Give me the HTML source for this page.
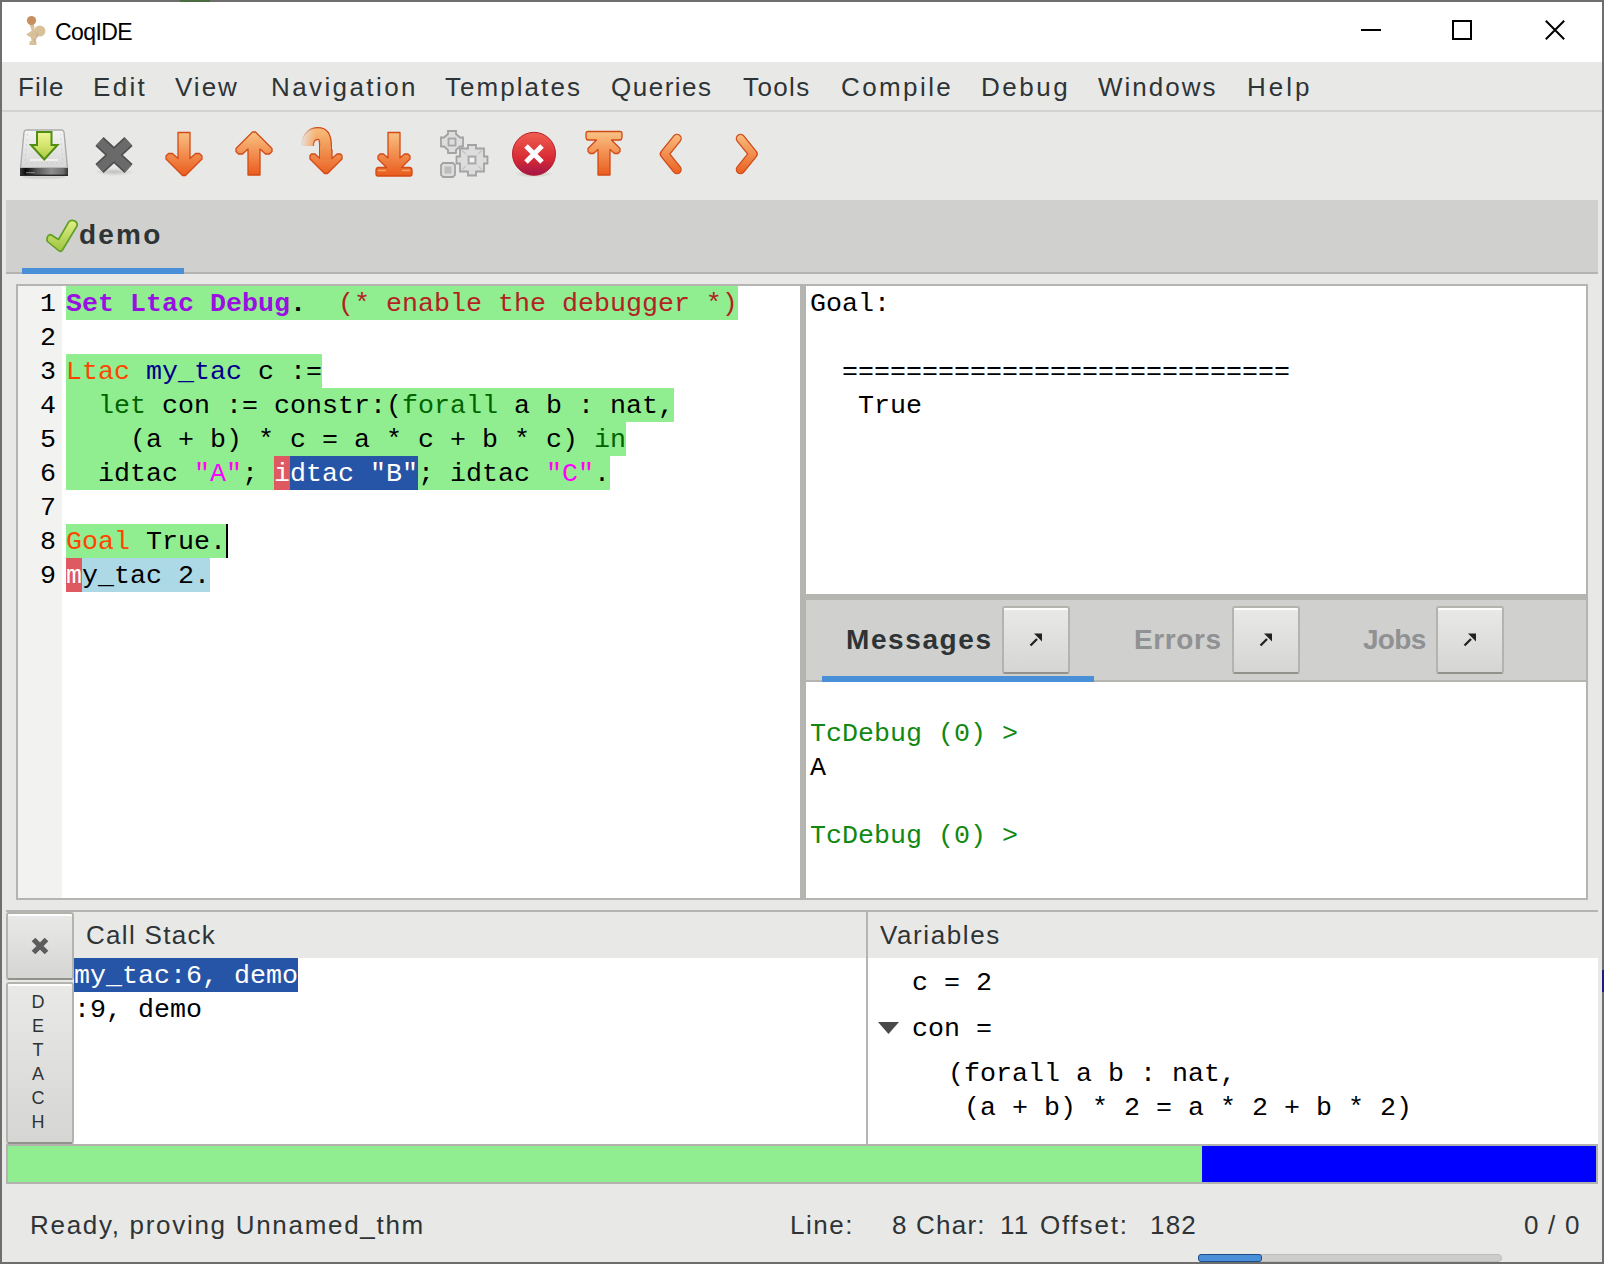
<!DOCTYPE html>
<html><head><meta charset="utf-8">
<style>
*{margin:0;padding:0;box-sizing:border-box}
html,body{width:1604px;height:1264px;overflow:hidden;background:#e8e8e7;position:relative}
.a{position:absolute}
.s{font-family:"Liberation Sans",sans-serif;white-space:pre}
.m{font-family:"Liberation Mono",monospace;white-space:pre;font-size:26.67px;line-height:34px}
.menu{font-size:26px;color:#2e3436;top:70px;letter-spacing:1.2px;line-height:34px}
.btn{border:2px solid #b4b4ae;border-bottom-color:#92928c;border-radius:3px;background:linear-gradient(#e9e9e8,#d5d5d3);box-shadow:inset 0 2px #fdfdfd}
.ln{color:#000;text-align:right;width:40px;left:16px}
</style></head><body>
<!-- window border -->
<div class="a" style="left:0;top:0;width:1604px;height:1264px;background:#6e6e6e"></div>
<div class="a" style="left:2px;top:2px;width:1600px;height:1260px;background:#e8e8e7"></div>
<div class="a" style="left:180px;top:0;width:30px;height:2px;background:#4b6b42"></div>
<div class="a" style="left:1602px;top:970px;width:2px;height:22px;background:#1a1a80"></div>
<!-- title bar -->
<div class="a" style="left:2px;top:2px;width:1600px;height:60px;background:#fff"></div>
<div class="a s" style="left:55px;top:18px;font-size:23px;line-height:28px;color:#000;letter-spacing:-0.6px">CoqIDE</div>
<!-- window controls -->
<div class="a" style="left:1361px;top:29px;width:20px;height:2px;background:#000"></div>
<div class="a" style="left:1452px;top:20px;width:20px;height:20px;border:2px solid #000"></div>
<svg class="a" style="left:1544px;top:19px" width="22" height="22"><path d="M1.8 1.8L20.2 20.2M20.2 1.8L1.8 20.2" stroke="#000" stroke-width="2"/></svg>

<!-- menu -->
<div class="a s menu" style="left:18px;letter-spacing:1.2px">File</div>
<div class="a s menu" style="left:93px;letter-spacing:2.3px">Edit</div>
<div class="a s menu" style="left:175px;letter-spacing:2.0px">View</div>
<div class="a s menu" style="left:271px;letter-spacing:2.4px">Navigation</div>
<div class="a s menu" style="left:445px;letter-spacing:2.05px">Templates</div>
<div class="a s menu" style="left:611px;letter-spacing:1.5px">Queries</div>
<div class="a s menu" style="left:743px;letter-spacing:1.4px">Tools</div>
<div class="a s menu" style="left:841px;letter-spacing:2.4px">Compile</div>
<div class="a s menu" style="left:981px;letter-spacing:2.5px">Debug</div>
<div class="a s menu" style="left:1098px;letter-spacing:2.0px">Windows</div>
<div class="a s menu" style="left:1247px;letter-spacing:3.0px">Help</div>
<div class="a" style="left:2px;top:110px;width:1600px;height:2px;background:#d2d2d0"></div>

<!-- TOOLBAR placeholder -->

<svg class="a" style="left:0;top:110px" width="800" height="90" viewBox="0 110 800 90">
<defs>
<linearGradient id="og" x1="0" y1="132" x2="0" y2="176" gradientUnits="userSpaceOnUse"><stop offset="0" stop-color="#f9c183"/><stop offset="1" stop-color="#ea5b1c"/></linearGradient>
<linearGradient id="gg" x1="0" y1="132" x2="0" y2="160" gradientUnits="userSpaceOnUse"><stop offset="0" stop-color="#eef59a"/><stop offset="0.5" stop-color="#d2e46a"/><stop offset="1" stop-color="#a6c640"/></linearGradient>
<linearGradient id="dg" x1="0" y1="130" x2="0" y2="168" gradientUnits="userSpaceOnUse"><stop offset="0" stop-color="#f4f4f4"/><stop offset="1" stop-color="#d6d6d6"/></linearGradient>
<linearGradient id="bg2" x1="20" y1="0" x2="68" y2="0" gradientUnits="userSpaceOnUse"><stop offset="0" stop-color="#3a3a3a"/><stop offset="0.12" stop-color="#080808"/><stop offset="0.35" stop-color="#555"/><stop offset="0.65" stop-color="#8e8e8e"/><stop offset="0.9" stop-color="#6e6e6e"/><stop offset="1" stop-color="#333"/></linearGradient>
<linearGradient id="rg" x1="0" y1="132" x2="0" y2="176" gradientUnits="userSpaceOnUse"><stop offset="0" stop-color="#f06050"/><stop offset="0.6" stop-color="#d82a34"/><stop offset="1" stop-color="#a0144a"/></linearGradient>
<linearGradient id="ogu" x1="0" y1="175" x2="0" y2="132" gradientUnits="userSpaceOnUse"><stop offset="0" stop-color="#f9c183"/><stop offset="1" stop-color="#ea5b1c"/></linearGradient>
<linearGradient id="og2" x1="0" y1="132" x2="0" y2="176" gradientUnits="userSpaceOnUse"><stop offset="0" stop-color="#f5b774"/><stop offset="1" stop-color="#ea5b1c"/></linearGradient>
<linearGradient id="fade" x1="301" y1="0" x2="314" y2="0" gradientUnits="userSpaceOnUse"><stop offset="0" stop-color="#e07a40" stop-opacity="0"/><stop offset="1" stop-color="#d24a16"/></linearGradient>
<linearGradient id="fadem" x1="300" y1="0" x2="316" y2="0" gradientUnits="userSpaceOnUse"><stop offset="0" stop-color="#000"/><stop offset="1" stop-color="#fff"/></linearGradient>
<radialGradient id="sh"><stop offset="0" stop-color="#000" stop-opacity="0.18"/><stop offset="1" stop-color="#000" stop-opacity="0"/></radialGradient>
</defs>
<!-- 1 save -->
<ellipse cx="44" cy="177" rx="22" ry="2" fill="#000" opacity="0.08"/>
<path d="M24 132 Q24.5 130 26.5 130 H61.5 Q63.5 130 64 132 L67.5 168 H20.5 Z" fill="url(#dg)" stroke="#acacac" stroke-width="1.4"/>
<path d="M27.5 134 L25 163 H63 L60.5 134" fill="none" stroke="#c4c4c4" stroke-width="1" stroke-dasharray="2 3" opacity="0.7"/>
<path d="M30 160 H58" stroke="#fafafa" stroke-width="1.5" opacity="0.9"/>
<rect x="20" y="168" width="48" height="8" rx="0.8" fill="url(#bg2)"/>
<rect x="20" y="174.6" width="48" height="1.4" fill="#2a2a2a"/>
<rect x="26" y="172" width="9" height="1.2" fill="#a0a0a0" opacity="0.7"/>
<path d="M37 132 H51.5 V145 H57.5 L44.25 159.5 L31 145 H37 Z" fill="url(#gg)" stroke="#4f8e12" stroke-width="2" stroke-linejoin="miter"/>
<!-- 2 gray x -->
<ellipse cx="114" cy="172" rx="20" ry="4" fill="url(#sh)"/>
<path d="M99.5 141.5 L128.5 168.5 M128.5 141.5 L99.5 168.5" stroke="#4e4e4e" stroke-width="12" stroke-linecap="butt"/>
<path d="M99.5 141.5 L128.5 168.5 M128.5 141.5 L99.5 168.5" stroke="#6a6a6a" stroke-width="9" stroke-linecap="butt"/>
<!-- 3 down -->
<path transform="translate(0 0)" d="M178,132.5 H190 V158.5 L195.5,153.5 H199.5 L202,156 V159 L185.5,175.5 H182.5 L166,159 V156 L168.5,153.5 H172.5 L178,158.5 Z" fill="url(#og)" stroke="#d24a16" stroke-width="1.3" stroke-linejoin="round"/>
<!-- 4 up -->
<path transform="translate(70 307.5) scale(1 -1)" d="M178,132.5 H190 V158.5 L195.5,153.5 H199.5 L202,156 V159 L185.5,175.5 H182.5 L166,159 V156 L168.5,153.5 H172.5 L178,158.5 Z" fill="url(#ogu)" stroke="#d24a16" stroke-width="1.3" stroke-linejoin="round"/>
<!-- 5 curve -->
<mask id="fm" maskUnits="userSpaceOnUse" x="290" y="120" width="60" height="60"><rect x="290" y="120" width="60" height="60" fill="url(#fadem)"/></mask>
<g mask="url(#fm)">
<path d="M307.5 146 C307.5 138, 312 133.5, 318 133.5 C324 133.5, 325.5 138, 325.5 146 V160" fill="none" stroke="#d24a16" stroke-width="13"/>
<path d="M307.5 146 C307.5 138, 312 133.5, 318 133.5 C324 133.5, 325.5 138, 325.5 146 V160" fill="none" stroke="url(#og2)" stroke-width="10.5"/>
</g>
<path transform="translate(142 0)" d="M178,150 H190 V158.5 L195,154 H198.5 L200,155.5 V159 L185.5,173.5 H182.5 L168,159 V155.5 L169.5,154 H173 L178,158.5 Z" fill="url(#og)" stroke="#d24a16" stroke-width="1.3" stroke-linejoin="round"/>
<path d="M320 146 H331 V160 H320 Z" fill="url(#og2)"/>
<!-- 6 down bar -->
<path d="M388,132.5 H400 V158 L404.5,154 H408 L410,156 V159 L401.5,167.5 H410 Q412,168 412,170 V174 Q412,176 410,176 H378 Q376,176 376,174 V170 Q376,168 378,167.5 H386.5 L378,159 V156 L380,154 H383.5 L388,158 Z" fill="url(#og)" stroke="#d24a16" stroke-width="1.3" stroke-linejoin="round"/>
<path d="M378 170.5 H386 M402 170.5 H410" stroke="#f7b07a" stroke-width="1.3" opacity="0.8"/>
<!-- 9 up bar -->
<path transform="translate(210 307.5) scale(1 -1)" d="M388,132.5 H400 V158 L404.5,154 H408 L410,156 V159 L401.5,167.5 H410 Q412,168 412,170 V174 Q412,176 410,176 H378 Q376,176 376,174 V170 Q376,168 378,167.5 H386.5 L378,159 V156 L380,154 H383.5 L388,158 Z" fill="url(#ogu)" stroke="#d24a16" stroke-width="1.3" stroke-linejoin="round"/>
<g fill="none" stroke-linecap="round" stroke-linejoin="round">
<!-- 10 < -->
<path d="M677 138.5 L664.5 154 L677 169.5" stroke="#d24a16" stroke-width="9.6"/>
<path d="M677 138.5 L664.5 154 L677 169.5" stroke="url(#og)" stroke-width="7"/>
<!-- 11 > -->
<path d="M740.5 138.5 L753 154 L740.5 169.5" stroke="#d24a16" stroke-width="9.6"/>
<path d="M740.5 138.5 L753 154 L740.5 169.5" stroke="url(#og)" stroke-width="7"/>
</g>
<!-- 7 gears -->
<g stroke="#a2a2a2" stroke-width="1.8" fill="#dddddd">
<path d="M448 131 H456 V134 L460 137.5 H463 V146.5 H460 L456 150 V153 H448 V150 L444 146.5 H441 V137.5 H444 L448 134 Z"/>
<path d="M468 145 H476 V148.5 H484 V156.5 H487.5 V163.5 H484 V171.5 H476 V175.5 H468 V171.5 H460 V163.5 H456.5 V156.5 H460 V148.5 H468 Z"/>
<path d="M443 163 H453 L455 165 V175 L453 177 H443 L441 175 V165 Z"/>
</g>
<g fill="none" stroke="#a6a6a6" stroke-width="1.8">
<rect x="448.5" y="138.5" width="7" height="7"/>
<rect x="468.5" y="156.5" width="7" height="7"/>
</g>
<rect x="444.5" y="166.5" width="7" height="7" fill="#bcbcbc"/>
<rect x="470" y="158" width="4" height="4" fill="#f2f2f2"/>
<path d="M462 150.5 L466 154 M482 150.5 L478 154 M462 169.5 L466 166 M482 169.5 L478 166" stroke="#c6c6c6" stroke-width="1.5"/>
<!-- 8 red circle -->
<ellipse cx="534" cy="174" rx="20" ry="3.5" fill="url(#sh)"/>
<circle cx="534" cy="153.8" r="21.5" fill="url(#rg)" stroke="#b8202e" stroke-width="1"/>
<path d="M526 146 L542 162 M542 146 L526 162" stroke="#fff" stroke-width="5"/>
</svg>
<!-- title rooster -->
<svg class="a" style="left:20px;top:12px" width="30" height="36" viewBox="20 12 30 36">
<path d="M29 23 L34 23 L34.5 31.5 L32 31.5 Z" fill="#d8c098"/>
<circle cx="39.8" cy="31" r="5.6" fill="#d8c098"/>
<path d="M26 34.5 L33 30 L37 29 L38 36.5 L36 39.5 L36 42 L36.5 42 V45 H29.5 V41.5 L31.5 41 L31 37.5 Z" fill="#d8c098"/>
<path d="M37 33 V37 M34.5 39 L35 42" stroke="#8a8a8a" stroke-width="0.7" opacity="0.6"/>
<circle cx="31.5" cy="20.5" r="4.6" fill="#c88f5e"/>
</svg>
<!-- notebook tab -->
<div class="a" style="left:6px;top:200px;width:1592px;height:72px;background:#d0d0ce"></div>
<div class="a" style="left:6px;top:272px;width:1592px;height:2px;background:#b4b4b0"></div>
<div class="a" style="left:22px;top:268px;width:162px;height:6px;background:#4a90d9"></div>
<div class="a s" style="left:79px;top:218px;font-size:28px;font-weight:bold;color:#2e3436;line-height:34px;letter-spacing:2.2px">demo</div>

<!-- editor frame -->
<div class="a" style="left:16px;top:284px;width:790px;height:616px;background:#b4b5b0"></div>
<div class="a" style="left:18px;top:286px;width:44px;height:612px;background:#f2f2f1"></div>
<div class="a" style="left:62px;top:286px;width:738px;height:612px;background:#fff"></div>
<!-- goal frame -->
<div class="a" style="left:806px;top:284px;width:782px;height:616px;background:#b4b5b0"></div>
<div class="a" style="left:806px;top:286px;width:780px;height:308px;background:#fff"></div>
<div class="a" style="left:806px;top:600px;width:780px;height:80px;background:#d0d0ce"></div>
<div class="a" style="left:806px;top:682px;width:780px;height:216px;background:#fff"></div>


<!-- editor highlights -->
<div class="a" style="left:66px;top:286px;width:672px;height:34px;background:#90ee90"></div>
<div class="a" style="left:66px;top:354px;width:256px;height:34px;background:#90ee90"></div>
<div class="a" style="left:66px;top:388px;width:608px;height:34px;background:#90ee90"></div>
<div class="a" style="left:66px;top:422px;width:560px;height:34px;background:#90ee90"></div>
<div class="a" style="left:66px;top:456px;width:544px;height:34px;background:#90ee90"></div>
<div class="a" style="left:274px;top:456px;width:16px;height:34px;background:#de5a60"></div>
<div class="a" style="left:290px;top:456px;width:128px;height:34px;background:#2654a6"></div>
<div class="a" style="left:66px;top:524px;width:160px;height:34px;background:#90ee90"></div>
<div class="a" style="left:66px;top:558px;width:16px;height:34px;background:#de5a60"></div>
<div class="a" style="left:82px;top:558px;width:128px;height:34px;background:#add8e6"></div>
<div class="a" style="left:226px;top:524px;width:2px;height:34px;background:#000"></div>
<!-- line numbers -->
<div class="a m" style="left:24px;top:287px;width:32px;text-align:right;color:#000">1
2
3
4
5
6
7
8
9</div>
<!-- code -->
<div class="a m" style="left:66px;top:287px;color:#000"><b style="color:#9a10e0">Set Ltac Debug</b><b>.</b>  <span style="color:#b22222">(* enable the debugger *)</span>

<span style="color:#ff4500">Ltac</span> <span style="color:#00008b">my_tac</span> c :=
  <span style="color:#006400">let</span> con := constr:(<span style="color:#006400">forall</span> a b : nat,
    (a + b) * c = a * c + b * c) <span style="color:#006400">in</span>
  idtac <span style="color:#ff00ff">"A"</span>; <span style="color:#fff">idtac "B"</span>; idtac <span style="color:#ff00ff">"C"</span>.

<span style="color:#ff4500">Goal</span> True.
<span style="color:#fff">m</span>y_tac 2.</div>
<!-- goal text -->
<div class="a m" style="left:810px;top:287px;color:#000">Goal:

  ============================
   True</div>
<!-- messages tabs -->
<div class="a" style="left:806px;top:680px;width:780px;height:2px;background:#b4b4b0"></div>
<div class="a" style="left:822px;top:676px;width:272px;height:6px;background:#4a90d9"></div>
<div class="a s" style="left:846px;top:623px;font-size:28px;font-weight:bold;color:#2e3436;line-height:34px;letter-spacing:1.6px">Messages</div>
<div class="a s" style="left:1134px;top:623px;font-size:28px;font-weight:bold;color:#8f9193;line-height:34px;letter-spacing:0.6px">Errors</div>
<div class="a s" style="left:1363px;top:623px;font-size:28px;font-weight:bold;color:#8f9193;line-height:34px;letter-spacing:-0.7px">Jobs</div>
<div class="a btn" style="left:1002px;top:606px;width:68px;height:68px"></div>
<div class="a btn" style="left:1232px;top:606px;width:68px;height:68px"></div>
<div class="a btn" style="left:1436px;top:606px;width:68px;height:68px"></div>
<!-- messages text -->
<div class="a m" style="left:810px;top:717px;color:#118811">TcDebug (0) &gt;
<span style="color:#000">A</span>

TcDebug (0) &gt;</div>


<!-- debug panel -->
<div class="a" style="left:6px;top:910px;width:1592px;height:2px;background:#b4b4b0"></div>
<div class="a" style="left:74px;top:958px;width:792px;height:186px;background:#fff"></div>
<div class="a" style="left:868px;top:958px;width:730px;height:186px;background:#fff"></div>
<div class="a" style="left:866px;top:912px;width:2px;height:232px;background:#b4b4b0"></div>
<div class="a s" style="left:86px;top:918px;font-size:26px;color:#2e3436;line-height:34px;letter-spacing:1.3px">Call Stack</div>
<div class="a s" style="left:880px;top:918px;font-size:26px;color:#2e3436;line-height:34px;letter-spacing:1.6px">Variables</div>
<div class="a btn" style="left:6px;top:912px;width:68px;height:68px"></div>
<div class="a btn" style="left:6px;top:982px;width:68px;height:162px"></div>
<svg class="a" style="left:30px;top:936px" width="20" height="20"><path d="M3.5 3.5L16.5 16.5M16.5 3.5L3.5 16.5" stroke="#5c5c5c" stroke-width="5.2" stroke-linecap="butt"/></svg>
<div class="a s" style="left:4px;top:990px;width:68px;text-align:center;font-size:18px;line-height:24.1px;color:#2e3436">D
E
T
A
C
H</div>
<div class="a" style="left:74px;top:958px;width:224px;height:34px;background:#2654a6"></div>
<div class="a" style="left:74px;top:958px;width:792px;height:186px;overflow:hidden">
<div class="a m" style="left:0;top:1px;color:#000"><span style="color:#fff">my_tac:6, demo</span>
:9, demo</div></div>
<div class="a m" style="left:912px;top:966px;color:#000">c = 2</div>
<svg class="a" style="left:878px;top:1021px" width="22" height="14"><path d="M0 1H21L10.5 13Z" fill="#4a4a4a"/></svg>
<div class="a m" style="left:912px;top:1012px;color:#000">con =</div>
<div class="a m" style="left:948px;top:1057px;color:#000">(forall a b : nat,
 (a + b) * 2 = a * 2 + b * 2)</div>
<!-- progress -->
<div class="a" style="left:6px;top:1144px;width:1592px;height:40px;background:#b2b2ae"></div>
<div class="a" style="left:8px;top:1146px;width:1194px;height:36px;background:#90ee90"></div>
<div class="a" style="left:1202px;top:1146px;width:394px;height:36px;background:#0000ff"></div>
<!-- status -->
<div class="a s" style="left:30px;top:1208px;font-size:26px;color:#2e3436;line-height:34px;letter-spacing:1.7px">Ready, proving Unnamed_thm</div>
<div class="a s" style="left:790px;top:1208px;font-size:26px;color:#2e3436;line-height:34px;letter-spacing:1.5px">Line:</div>
<div class="a s" style="left:892px;top:1208px;font-size:26px;color:#2e3436;line-height:34px;letter-spacing:1.2px">8 Char:</div>
<div class="a s" style="left:1000px;top:1208px;font-size:26px;color:#2e3436;line-height:34px;letter-spacing:1.2px">11</div>
<div class="a s" style="left:1040px;top:1208px;font-size:26px;color:#2e3436;line-height:34px;letter-spacing:1.8px">Offset:</div>
<div class="a s" style="left:1150px;top:1208px;font-size:26px;color:#2e3436;line-height:34px;letter-spacing:1.2px">182</div>
<div class="a s" style="left:1524px;top:1208px;font-size:26px;color:#2e3436;line-height:34px;letter-spacing:1.2px">0 / 0</div>
<div class="a" style="left:1198px;top:1254px;width:304px;height:8px;background:#cdcdcb;border:1px solid #bdbdbb;border-radius:4px"></div>
<div class="a" style="left:1198px;top:1254px;width:64px;height:8px;background:#4a90d9;border:1px solid #1f4f8a;border-radius:3px"></div>

<!-- check in tab -->
<svg class="a" style="left:44px;top:216px" width="36" height="38" viewBox="44 216 36 38">
<defs><linearGradient id="ck" x1="0" y1="220" x2="0" y2="252" gradientUnits="userSpaceOnUse"><stop offset="0" stop-color="#e2f08a"/><stop offset="1" stop-color="#9cc23c"/></linearGradient></defs>
<path d="M47 238.5 Q47.5 235 50.5 234.5 L58.5 239.5 L69 221.5 Q71.5 219.5 75 221 Q78 223 77 226 L62.5 250 Q60.5 252.5 58.5 250.5 L48 242 Q46.5 240.5 47 238.5 Z" fill="url(#ck)" stroke="#5f9f22" stroke-width="1.6" stroke-linejoin="round"/>
</svg>
<!-- button arrows -->
<svg class="a" style="left:1002px;top:606px" width="68" height="68"><path d="M28.5 39.5 L35 33" stroke="#222" stroke-width="2.3"/><path d="M32 27.5 H40 V35.5 Z" fill="#222"/></svg>
<svg class="a" style="left:1232px;top:606px" width="68" height="68"><path d="M28.5 39.5 L35 33" stroke="#222" stroke-width="2.3"/><path d="M32 27.5 H40 V35.5 Z" fill="#222"/></svg>
<svg class="a" style="left:1436px;top:606px" width="68" height="68"><path d="M28.5 39.5 L35 33" stroke="#222" stroke-width="2.3"/><path d="M32 27.5 H40 V35.5 Z" fill="#222"/></svg>


</body></html>
